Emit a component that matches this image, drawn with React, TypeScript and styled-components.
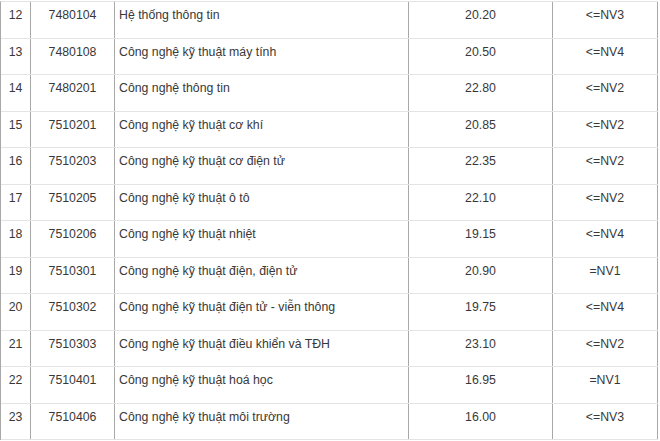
import React from 'react'
import styled, { createGlobalStyle } from 'styled-components'

const GlobalStyle = createGlobalStyle`
    html, body {
        margin: 0;
        padding: 0;
        background: #ffffff;
    }
    body {
        font-family: "Liberation Sans", Arial, sans-serif;
        color: #383838;
    }
`

const rows = [
    ['12', '7480104', 'Hệ thống thông tin', '20.20', '<=NV3'],
    ['13', '7480108', 'Công nghệ kỹ thuật máy tính', '20.50', '<=NV4'],
    ['14', '7480201', 'Công nghệ thông tin', '22.80', '<=NV2'],
    ['15', '7510201', 'Công nghệ kỹ thuật cơ khí', '20.85', '<=NV2'],
    ['16', '7510203', 'Công nghệ kỹ thuật cơ điện tử', '22.35', '<=NV2'],
    ['17', '7510205', 'Công nghệ kỹ thuật ô tô', '22.10', '<=NV2'],
    ['18', '7510206', 'Công nghệ kỹ thuật nhiệt', '19.15', '<=NV4'],
    ['19', '7510301', 'Công nghệ kỹ thuật điện, điện tử', '20.90', '=NV1'],
    ['20', '7510302', 'Công nghệ kỹ thuật điện tử - viễn thông', '19.75', '<=NV4'],
    ['21', '7510303', 'Công nghệ kỹ thuật điều khiển và TĐH', '23.10', '<=NV2'],
    ['22', '7510401', 'Công nghệ kỹ thuật hoá học', '16.95', '=NV1'],
    ['23', '7510406', 'Công nghệ kỹ thuật môi trường', '16.00', '<=NV3'],
]

const Table = styled.div`
    width: 658px;
    margin-top: 1px;
    border-top: 1px solid #e4e4e4;
    border-left: 1px solid #a8a8a8;
    box-sizing: border-box;
`

const Row = styled.div`
    display: grid;
    grid-template-columns: 30px 84px 294px 144px 105px;
    height: 36.5px;
    box-sizing: border-box;
    border-bottom: 1px solid #e4e4e4;
`

const Cell = styled.div<{ $align?: 'left' | 'center' }>`
    box-sizing: border-box;
    border-right: 1px solid #a8a8a8;
    padding: 6px ${(p) => (p.$align === 'left' ? '4px' : '0')} 0;
    text-align: ${(p) => p.$align ?? 'center'};
    font-size: 12.3px;
    line-height: 15px;
    white-space: nowrap;
    overflow: hidden;
`

export default function App() {
    return (
        <>
            <GlobalStyle />
            <Table>
                {rows.map(([no, code, name, score, wish]) => (
                    <Row key={no}>
                        <Cell>{no}</Cell>
                        <Cell>{code}</Cell>
                        <Cell $align="left">{name}</Cell>
                        <Cell>{score}</Cell>
                        <Cell>{wish}</Cell>
                    </Row>
                ))}
            </Table>
        </>
    )
}
